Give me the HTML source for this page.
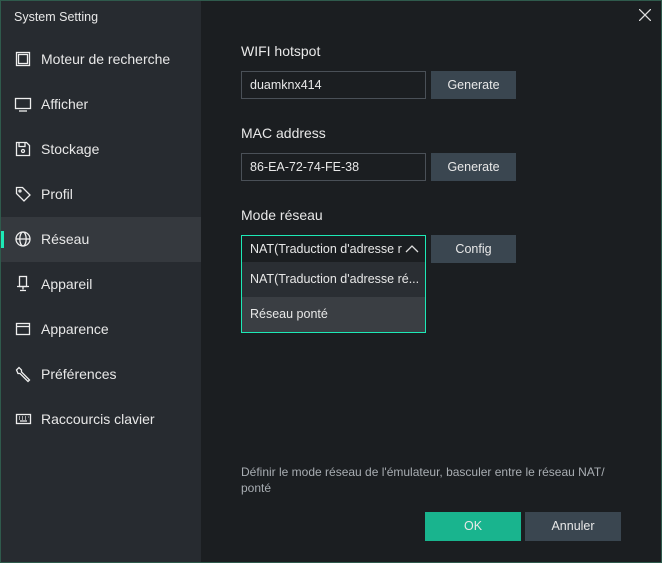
<!DOCTYPE html><html><head><style>
*{margin:0;padding:0;box-sizing:border-box}
body{width:662px;height:563px;background:#1b1e21;font-family:"Liberation Sans",sans-serif;font-size:13px;color:#e8e8e8;position:relative;overflow:hidden}
.frame{position:absolute;left:0;top:0;width:662px;height:563px;border:1px solid #2f5a4c;pointer-events:none}
.side{position:absolute;left:0;top:0;width:201px;height:563px;background:#272b30}
.title{position:absolute;left:14px;top:10px;font-size:12.5px}
.item{position:absolute;left:0;width:201px;height:45px;font-size:14px}
.item svg{position:absolute;left:14px;top:13px}
.item span{position:absolute;left:41px;top:14px}
.sel{background:#35393e}
.sel:before{content:"";position:absolute;left:1px;top:14px;width:3px;height:17px;background:#1de9b6}
.lbl{position:absolute;left:241px;font-size:14px}
.inp{position:absolute;left:241px;width:185px;height:28px;border:1px solid #4a5057;background:#1b1e21;padding-left:8px;line-height:26px;font-size:12.5px}
.btn{position:absolute;left:431px;width:85px;height:28px;background:#3a4650;text-align:center;line-height:28px;font-size:12.5px}
</style></head><body>
<div class="side">
<div class="title">System Setting</div>
<div class="item" style="top:37px"><svg width="18" height="18" fill="none" stroke="#eee" stroke-width="1.3"><rect x="2.5" y="2.5" width="13" height="13"/><rect x="4.5" y="4.5" width="9" height="9"/></svg><span>Moteur de recherche</span></div>
<div class="item" style="top:82px"><svg width="18" height="18" fill="none" stroke="#eee" stroke-width="1.3"><rect x="1.5" y="3.5" width="15" height="10"/><path d="M5 16h8"/></svg><span>Afficher</span></div>
<div class="item" style="top:127px"><svg width="18" height="18" fill="none" stroke="#eee" stroke-width="1.3"><path d="M2.5 2.5h10l3 3v10h-13z M5 2.5v4h6v-4"/><circle cx="9" cy="11" r="1.5"/></svg><span>Stockage</span></div>
<div class="item" style="top:172px"><svg width="18" height="18" fill="none" stroke="#eee" stroke-width="1.3"><path d="M2.5 2.5h6l7.5 7.5-6 6-7.5-7.5z"/><circle cx="6" cy="6" r="1"/></svg><span>Profil</span></div>
<div class="item sel" style="top:217px"><svg width="18" height="18" fill="none" stroke="#eee" stroke-width="1.3"><circle cx="9" cy="9" r="7"/><ellipse cx="9" cy="9" rx="3.2" ry="7"/><path d="M2 9h14"/></svg><span>Réseau</span></div>
<div class="item" style="top:262px"><svg width="18" height="18" fill="none" stroke="#eee" stroke-width="1.3"><rect x="5.5" y="1.5" width="7" height="10"/><path d="M3 11.5h12M9 11.5v3M6 15.5h6"/></svg><span>Appareil</span></div>
<div class="item" style="top:307px"><svg width="18" height="18" fill="none" stroke="#eee" stroke-width="1.3"><rect x="2.5" y="3.5" width="13" height="11"/><path d="M2.5 6.5h13"/></svg><span>Apparence</span></div>
<div class="item" style="top:352px"><svg width="18" height="18" fill="none" stroke="#eee" stroke-width="1.3"><path d="M2.5 5l2.5-2.5 2.5 2.5v2l8 8-1.5 1.5-8-8h-2z"/></svg><span>Préférences</span></div>
<div class="item" style="top:397px"><svg width="18" height="18" fill="none" stroke="#eee" stroke-width="1.3"><rect x="2.5" y="4.5" width="14" height="9"/><path d="M5 7h1M8 7h1M11 7h1M14 7h0.5M5 9h1M8 9h1M11 9h1M6 11h7"/></svg><span>Raccourcis clavier</span></div>
</div>
<svg style="position:absolute;left:639px;top:9px" width="12" height="12" stroke="#ddd" stroke-width="1.3"><path d="M0 0l12 12M12 0L0 12"/></svg>
<div class="lbl" style="top:43px">WIFI hotspot</div>
<div class="inp" style="top:71px">duamknx414</div>
<div class="btn" style="top:71px">Generate</div>
<div class="lbl" style="top:125px">MAC address</div>
<div class="inp" style="top:153px">86-EA-72-74-FE-38</div>
<div class="btn" style="top:153px">Generate</div>
<div class="lbl" style="top:207px">Mode réseau</div>
<div class="inp" style="top:235px;border-color:#1de9b6;white-space:nowrap;overflow:hidden;padding-right:24px">NAT(Traduction d'adresse r</div>
<svg style="position:absolute;left:405px;top:244px" width="14" height="10" fill="none" stroke="#ddd" stroke-width="1.3"><path d="M1 8l6-6 6 6"/></svg>
<div class="btn" style="top:235px">Config</div>
<div style="position:absolute;left:241px;top:262px;width:185px;height:71px;border:1px solid #1de9b6;border-top:none;background:#2a2e33">
<div style="height:35px;line-height:35px;padding-left:8px;font-size:12.5px;white-space:nowrap;overflow:hidden">NAT(Traduction d'adresse ré...</div>
<div style="height:35px;line-height:35px;padding-left:8px;font-size:12.5px;background:#3a3e43">Réseau ponté</div>
</div>
<div style="position:absolute;left:241px;top:464px;width:390px;font-size:12px;color:#a8adb2;line-height:16px">Définir le mode réseau de l'émulateur, basculer entre le réseau NAT/ ponté</div>
<div style="position:absolute;left:425px;top:512px;width:96px;height:29px;background:#19b48e;text-align:center;line-height:29px;font-size:12.5px">OK</div>
<div style="position:absolute;left:525px;top:512px;width:96px;height:29px;background:#3a4650;text-align:center;line-height:29px;font-size:12.5px">Annuler</div>
<div class="frame"></div>
</body></html>
